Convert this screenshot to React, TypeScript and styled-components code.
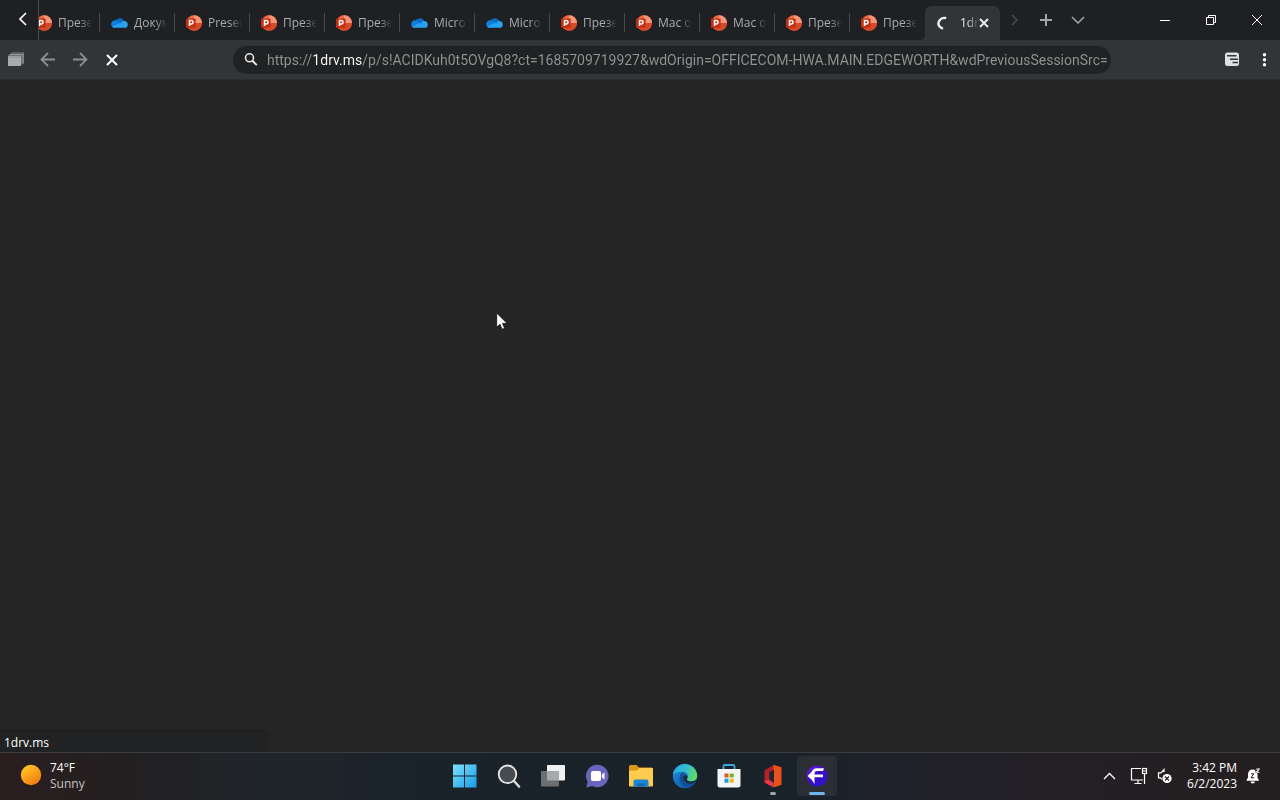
import React, { useId, useState } from "react";
import styled, { createGlobalStyle, css } from "styled-components";

const GlobalStyle = createGlobalStyle`
  * { box-sizing: border-box; }
  body {
    margin: 0;
    background: #252525;
    color: #fff;
    font-family: "Open Sans", "Noto Sans", sans-serif;
    font-size: 12px;
    line-height: 16px;
    overflow: hidden;
  }
  button {
    border: 0;
    padding: 0;
    background: none;
    color: inherit;
    font: inherit;
  }
  svg { display: block; flex: none; }
`;

const Desktop = styled.div`
  position: relative;
  min-height: 100vh;
  display: flex;
  flex-direction: column;
`;

/* ---------- title bar and tabs ---------- */

const TitleBar = styled.header`
  display: flex;
  height: 40px;
  background: #1f2024;
`;

const ScrollBack = styled.button`
  width: 39px;
  padding: 0 0 2px 8px;
  display: flex;
  align-items: center;
  justify-content: center;
  border-right: 1px solid #4b4d50;
`;

const TabStrip = styled.nav`
  display: flex;
  align-items: flex-end;
  min-width: 0;
  overflow: hidden;
`;

const TabList = styled.div`
  display: flex;
  align-items: flex-end;
  margin-left: -14px;
`;

const TabButton = styled.button<{ $active?: boolean }>`
  position: relative;
  flex: none;
  display: flex;
  align-items: center;
  gap: 6px;
  width: 75px;
  height: 34px;
  padding: 0 8px 1px 11px;
  color: #a9abad;
  text-align: left;

  &::after {
    content: "";
    position: absolute;
    right: 0;
    top: 7px;
    width: 1px;
    height: 19px;
    background: ${(p) => (p.$active ? "transparent" : "#47494d")};
  }

  &:nth-last-child(2)::after {
    background: transparent;
  }

  ${(p) =>
    p.$active &&
    css`
      gap: 8px;
      padding-right: 11px;
      background: #323538;
      border-radius: 7px 7px 0 0;
      color: #e8e8e8;

      &::before {
        content: "";
        position: absolute;
        left: -5px;
        bottom: 0;
        width: 5px;
        height: 5px;
        background: radial-gradient(circle at 0 0, transparent 5px, #323538 5px);
      }
    `}
`;

const TabTitle = styled.span<{ $wide?: boolean }>`
  flex: 1;
  min-width: 0;
  margin-right: ${(p) => (p.$wide ? "-8px" : "0")};
  overflow: hidden;
  white-space: nowrap;
  mask-image: linear-gradient(90deg, #000 calc(100% - 12px), transparent);
`;

const StripButton = styled.button<{ $dim?: boolean }>`
  width: ${(p) => (p.$dim ? 30 : 32)}px;
  height: 40px;
  display: flex;
  align-items: center;
  justify-content: center;
  color: ${(p) => (p.$dim ? "#4c4e51" : "#a3a5a7")};
`;

const WindowControls = styled.div`
  display: flex;
  margin-left: auto;
`;

const WindowButton = styled.button`
  width: 46px;
  height: 40px;
  display: flex;
  align-items: center;
  justify-content: center;
  color: #fff;
`;

/* ---------- navigation bar ---------- */

const NavBar = styled.div`
  display: flex;
  align-items: center;
  height: 40px;
  background: #323538;
  border-bottom: 1px solid #2b2c2e;
`;

const NavButton = styled.button<{ $dim?: boolean }>`
  width: 32px;
  height: 32px;
  display: flex;
  align-items: center;
  justify-content: center;
  color: ${(p) => (p.$dim ? "#8b8d8f" : "#fff")};
`;

const AddressBox = styled.form`
  flex: 1;
  min-width: 0;
  display: flex;
  align-items: center;
  gap: 8px;
  height: 28px;
  margin: 0 105px;
  padding: 0 0 0 10px;
  border-radius: 14px;
  background: #202223;
`;

const AddressLabel = styled.label`
  display: flex;
  color: #e6e6e6;
`;

/* The host part of the address is lit, the rest is grey. */
const AddressInput = styled.input`
  flex: 1;
  min-width: 0;
  height: 24px;
  border: 0;
  outline: 0;
  padding: 0;
  font: 14px/20px Roboto, "Open Sans", sans-serif;
  color: transparent;
  background: linear-gradient(90deg, #929494 46px, #ffffff 46px, #ffffff 95px, #929494 95px);
  background-clip: text;
  -webkit-background-clip: text;
`;

/* ---------- page ---------- */

const Page = styled.main`
  position: relative;
  flex: 1;
  background: #252525;
`;

const StatusBubble = styled.div`
  position: absolute;
  left: 0;
  bottom: 0;
  width: 268px;
  padding: 4px 4px 1px;
  background: #202223;
  border-top: 1px solid #1d1e1f;
  border-radius: 0 6px 0 0;
`;

const Pointer = styled.div`
  position: absolute;
  left: 496px;
  top: 312px;
`;

/* ---------- taskbar ---------- */

const Taskbar = styled.footer`
  display: grid;
  grid-template-columns: 1fr auto 1fr;
  align-items: center;
  height: 48px;
  padding-bottom: 1px;
  border-top: 1px solid #3a3c3e;
  background: linear-gradient(90deg, #2a1e1f 0%, #231f20 9%, #20252a 20%, #1b232a 30%, #1a2229 62%, #22212a 74%, #241f23 85%, #231e1f 100%);
`;

const Weather = styled.button`
  justify-self: start;
  display: flex;
  align-items: center;
  gap: 8px;
  padding-left: 20px;
  text-align: left;
`;

const Lines = styled.span<{ $end?: boolean }>`
  display: flex;
  flex-direction: column;
  text-align: ${(p) => (p.$end ? "right" : "left")};
`;

const Muted = styled.span`
  color: #c6c1c1;
`;

const AppRow = styled.div`
  display: flex;
  gap: 4px;
  padding-left: 2px;
`;

const AppButton = styled.button<{ $active?: boolean; $running?: boolean }>`
  position: relative;
  width: 40px;
  height: 40px;
  display: flex;
  align-items: center;
  justify-content: center;
  border-radius: 4px;
  background: ${(p) => (p.$active ? "#2b2e35" : "transparent")};

  &::after {
    content: "";
    position: absolute;
    bottom: 1px;
    width: ${(p) => (p.$active ? 16 : p.$running ? 6 : 0)}px;
    height: 3px;
    border-radius: 2px;
    background: ${(p) => (p.$active ? "#6cb6ea" : "#a0a2a4")};
  }
`;

const Tray = styled.div`
  justify-self: end;
  display: flex;
  align-items: center;
  gap: 14px;
  padding-right: 19px;
`;

const TrayButton = styled.button`
  display: flex;
  align-items: center;
  gap: 9px;
`;

/* ---------- icons ---------- */

const PowerPoint = () => {
  const id = useId();
  return (
    <svg width="16" height="16" viewBox="0 0 16 16">
      <defs>
        <clipPath id={id}>
          <circle cx="8.2" cy="8" r="7.8" />
        </clipPath>
      </defs>
      <g clipPath={`url(#${id})`}>
        <rect width="16" height="16" fill="#d9512f" />
        <path d="M8 0h8v8H8z" fill="#f7957a" />
        <path d="M0 0h8v8H0z" fill="#ed6c47" />
        <path d="M0 8h16v8H0z" fill="#d64a28" />
      </g>
      <rect x="0" y="3.4" width="9.6" height="9.4" rx=".9" fill="#c22f13" />
      <path d="M3.500 11V5.600h1.900a1.600 1.600 0 0 1 0 3.300H3.500" fill="none" stroke="#fff" strokeWidth="1.500" />
    </svg>
  );
};

const OneDrive = () => (
  <svg width="17" height="16" viewBox="0 0 17 16">
    <path d="M4 7.200A4.800 4.800 0 0 1 13.200 6.500l-2 5z" fill="#0a6cc6" />
    <path d="M5 5.400A3.900 3.900 0 0 0 .5 10.800c.5 1 1.500 1.700 2.600 1.700L11 9z" fill="#0f7fdc" />
    <path d="M10.600 7.400A3.400 3.400 0 0 1 16.700 10a2.600 2.600 0 0 1-2.500 2.700z" fill="#2aa5ee" />
    <path d="M1 11.400 9.600 7.800l6.700 3.800c-.5.700-1.200 1.100-2.100 1.100h-11c-.9 0-1.700-.5-2.200-1.300z" fill="#28a0f2" />
  </svg>
);

const Spinner = () => (
  <svg width="16" height="16" viewBox="0 0 16 16">
    <path d="M10.200 3.200C3.500 1.500-1.500 10 7 13.800" fill="none" stroke="#f2f2f2" strokeWidth="2.300" />
  </svg>
);

const stroke = { fill: "none", stroke: "currentColor" };

const Close = ({ size, weight }: { size: number; weight: number }) => (
  <svg width={size} height={size} viewBox={`0 0 ${size} ${size}`}>
    <path d={`M1 1 ${size - 1} ${size - 1}M${size - 1} 1 1 ${size - 1}`} {...stroke} strokeWidth={weight} />
  </svg>
);

const SearchGlyph = () => (
  <svg width="16" height="16" viewBox="0 0 16 16">
    <circle cx="6.500" cy="5.800" r="4" {...stroke} strokeWidth="1.600" />
    <path d="m9.400 8.700 4.400 4.400" {...stroke} strokeWidth="2" />
  </svg>
);

const Arrow = ({ flip }: { flip?: boolean }) => (
  <svg width="16" height="16" viewBox="0 0 16 16">
    <path d={flip ? "M1 7.500h13M8 1 14.500 7.500 8 14" : "M15 7.500H2M8 1 1.500 7.500 8 14"} {...stroke} strokeWidth="1.800" />
  </svg>
);

const Workspace = () => (
  <svg width="16" height="16" viewBox="0 0 16 16">
    <path d="M3 1h12.500V11.500" fill="none" stroke="#85878a" strokeWidth="1.200" />
    <path d="M1.500 2.500h12.500v10" fill="none" stroke="#9b9d9f" strokeWidth="1.200" />
    <rect x="0" y="3.500" width="13" height="10.500" fill="#a9abac" />
    <path d="M0 5h13" stroke="#85878a" strokeWidth=".8" />
  </svg>
);

const Wallet = () => (
  <svg width="16" height="16" viewBox="0 0 16 16">
    <rect x="1" y="0.500" width="14" height="13.500" rx="2.500" fill="#dfe0e1" />
    <path d="M3 3.800h9.500M6 7.300H14M8.500 10.500H14" stroke="#323538" strokeWidth="1.500" />
  </svg>
);

const Dots = () => (
  <svg width="16" height="16" viewBox="0 0 16 16" fill="currentColor">
    <circle cx="8.500" cy="2.700" r="1.700" />
    <circle cx="8.500" cy="7.700" r="1.700" />
    <circle cx="8.500" cy="12.700" r="1.700" />
  </svg>
);

const Sun = () => (
  <svg width="22" height="24" viewBox="0 0 22 24">
    <defs>
      <linearGradient id="sun" x1="0" y1="0" x2=".7" y2="1">
        <stop offset="0" stopColor="#ffd02e" />
        <stop offset=".6" stopColor="#fb9d17" />
        <stop offset="1" stopColor="#f07a12" />
      </linearGradient>
    </defs>
    <circle cx="11" cy="11" r="10.200" fill="url(#sun)" />
  </svg>
);

const Start = () => (
  <svg width="24" height="24" viewBox="0 0 24 24">
    <defs>
      <linearGradient id="start" x1="0" y1="0" x2="1" y2="1" >
        <stop offset="0" stopColor="#7fe2fb" />
        <stop offset="1" stopColor="#169be6" />
      </linearGradient>
    </defs>
    <path d="M0 .5h11v11H0zM12 .5h11.500v11H12zM0 12.500h11v11H0zM12 12.500h11.500v11H12z" fill="url(#start)" />
  </svg>
);

const TaskSearch = () => (
  <svg width="24" height="24" viewBox="0 0 24 24">
    <path d="m17 17 5 5.500" stroke="#d4d7d9" strokeWidth="2.600" strokeLinecap="round" />
    <circle cx="10.500" cy="10.300" r="8.800" fill="#474c50" stroke="#e4e6e7" strokeWidth="1.800" />
  </svg>
);

const TaskView = () => (
  <svg width="26" height="24" viewBox="0 0 26 24">
    <rect x="7" y="1" width="18" height="15.500" rx="1" fill="#f1f1f1" />
    <rect x="1" y="7" width="18" height="15.500" rx="1" fill="#6d7073" />
    <path d="M7 7h12v9.500H7z" fill="#a6a8aa" />
  </svg>
);

const Chat = () => (
  <svg width="24" height="24" viewBox="0 0 24 24">
    <path d="M12.300.8a11.200 11.200 0 1 1-5 21.200L1.200 23.500l1.500-5.600A11.200 11.200 0 0 1 12.300.8z" fill="#6a64ba" />
    <rect x="6" y="7" width="10" height="10" rx="1.800" fill="#fff" />
    <path d="m16.800 10.800 2.700-2.300v7l-2.700-2.300z" fill="#fff" />
  </svg>
);

const Explorer = () => (
  <svg width="26" height="24" viewBox="0 0 26 24">
    <path d="M1 2.500Q1 1 2.500 1h6L11 3.500h12.500Q25 3.500 25 5v6H1z" fill="#dc9514" />
    <path d="M1 6.500h8L11.500 4H24q1 0 1 1v16.500q0 1-1 1H2q-1 0-1-1z" fill="#fdcb4d" />
    <path d="M5.500 22.500v-5q0-2 2-2h11q2 0 2 2v5z" fill="#1d83d2" />
    <path d="M9 22.500v-3h8v3z" fill="#1669b4" />
  </svg>
);

const Edge = () => (
  <svg width="26" height="26" viewBox="0 0 26 26">
    <defs>
      <linearGradient id="edgeTop" x1="0" y1=".3" x2="1" y2=".5">
        <stop offset="0" stopColor="#2ba9e6" />
        <stop offset=".5" stopColor="#30bdd2" />
        <stop offset="1" stopColor="#64d95e" />
      </linearGradient>
      <linearGradient id="edgeLow" x1="0" y1="0" x2="1" y2="1">
        <stop offset="0" stopColor="#1f93da" />
        <stop offset="1" stopColor="#0d4c9a" />
      </linearGradient>
    </defs>
    <circle cx="13" cy="13" r="12.200" fill="url(#edgeLow)" />
    <path d="M.9 12A12.200 12.200 0 0 1 25.200 12.500c0 4-2.800 6-6 6-3.500 0-5.200-1.200-4.200-2.600 2-2.800.5-7.100-4.400-7.100C6 8.800 2 10 .9 12z" fill="url(#edgeTop)" />
    <path d="M10.500 9.500C6 12 6.500 21 14 24.500c4 .5 7.500-2 9.500-5.200-5 2.500-11.500 1-12.500-3.500-.4-2.500.5-4 1.800-5.200z" fill="#114f9c" />
    <path d="M11.400 13c1.300-2 4.300-1 4.200 1-.1 1.200-1.100 1.800-.5 2.900 1 1.900 6 2.200 8.900-.5-1 3.500-3.500 4.300-6 4.300-4 0-7.800-3.700-6.600-7.700z" fill="#1c2a38" />
  </svg>
);

const Store = () => (
  <svg width="24" height="24" viewBox="0 0 24 24">
    <path d="M6.500 5.500V2.300Q6.500 1 7.800 1h8.400q1.300 0 1.300 1.300v3.200" fill="none" stroke="#39a9de" strokeWidth="1.800" />
    <path d="M.5 5h23v16q0 2.500-2.500 2.500H3Q.5 23.500.5 21z" fill="#f3f4f5" />
    <path d="M7.500 9.500h4v4h-4z" fill="#e05a28" />
    <path d="M12.700 9.500h4v4h-4z" fill="#78b51a" />
    <path d="M7.500 14.700h4v4h-4z" fill="#1c9de0" />
    <path d="M12.700 14.700h4v4h-4z" fill="#f4b713" />
  </svg>
);

const Office = () => (
  <svg width="24" height="24" viewBox="0 0 24 24">
    <path d="M3.500 6.500 13 .8V6L8.500 8v8L5.500 18.500l-2-1.500z" fill="#b3212c" />
    <path d="m12.500.8 8 2.500v17.500l-8 2.700z" fill="#e8501c" />
    <path d="m3.500 17 4.500-1.500 4.500 3v5l-9-5z" fill="#e33b4a" />
    <path d="m8.500 8 4.500-2v12.500L8.500 16z" fill="#20262c" />
  </svg>
);

const BrowserApp = () => (
  <svg width="24" height="24" viewBox="0 0 24 24">
    <defs>
      <linearGradient id="browser" x1="0" y1="0" x2="1" y2="1">
        <stop offset="0" stopColor="#6a1de0" />
        <stop offset=".5" stopColor="#3a0cc4" />
        <stop offset="1" stopColor="#3413d8" />
      </linearGradient>
    </defs>
    <circle cx="12" cy="12" r="10.500" fill="url(#browser)" />
    <path d="M19 4.200h-7.500Q8 4.500 6.500 8L2.500 12l4 3.500 3 4.500v-6.700H18v-2.800H9.500V9q.3-2 2.500-2h6z" fill="#fff" />
  </svg>
);

const Glyph = ({ d, w, h, weight = 1.5 }: { d: string; w: number; h: number; weight?: number }) => (
  <svg width={w} height={h} viewBox={`0 0 ${w} ${h}`}>
    <path d={d} {...stroke} strokeWidth={weight} />
  </svg>
);

const Network = () => (
  <svg width="18" height="18" viewBox="0 0 18 18">
    <path d="M11 1.500H1.500v11.500h11.500M4.500 16.500h7M8 13v3.500" {...stroke} strokeWidth="1.200" />
    <rect x="12.500" y="1.500" width="4" height="5" {...stroke} strokeWidth="1.200" />
    <path d="M13 4h3M14.500 7v10" {...stroke} strokeWidth="1.200" />
  </svg>
);

const SpeakerOff = () => (
  <svg width="16" height="16" viewBox="0 0 16 16">
    <path d="M7 4V1.500L4 4.800H1.500v5h2l1.500 1.500" {...stroke} strokeWidth="1.200" />
    <circle cx="10" cy="10.500" r="4.600" fill="#fff" />
    <path d="m8 8.500 4 4m0-4-4 4" stroke="#241f23" strokeWidth="1.200" />
  </svg>
);

const Bell = () => (
  <svg width="15" height="16" viewBox="0 0 15 16">
    <path d="M6.500 1.500c3.200 0 5 2 5 5V9.500l1.700 3.200H.3L2 9.500v-3c0-3 1.500-5 4.500-5z" fill="#fff" />
    <path d="M4.500 13.500a2.200 1.900 0 0 0 4.400 0z" fill="#fff" />
    <path d="M5 5.800h2.800L5 9.800h3.200" fill="none" stroke="#231e1f" strokeWidth="1" />
    <path d="M9.500 0H15v5H9.500z" fill="#231e1f" />
    <path d="M10.300 1h2.800l-2.800 3.300h3.200" fill="none" stroke="#fff" strokeWidth="1.100" />
  </svg>
);

const Cursor = () => (
  <svg width="12" height="19" viewBox="0 0 12 19">
    <path d="M.7 1v14.300l3.300-3 2.100 5 2.500-1-2.100-4.900h4.600z" fill="#fff" stroke="#111" strokeWidth=".8" />
  </svg>
);

/* ---------- data ---------- */

type Kind = "ppt" | "cloud";
const tabs: { kind: Kind; title: string }[] = [
  { kind: "ppt", title: "Презе" },
  { kind: "cloud", title: "Докум" },
  { kind: "ppt", title: "Presen" },
  { kind: "ppt", title: "Презе" },
  { kind: "ppt", title: "Презе" },
  { kind: "cloud", title: "Micro" },
  { kind: "cloud", title: "Micro" },
  { kind: "ppt", title: "Презе" },
  { kind: "ppt", title: "Mac o" },
  { kind: "ppt", title: "Mac o" },
  { kind: "ppt", title: "Презе" },
  { kind: "ppt", title: "Презе" },
];

const apps = [
  { name: "Start", icon: <Start /> },
  { name: "Search", icon: <TaskSearch /> },
  { name: "Task view", icon: <TaskView /> },
  { name: "Chat", icon: <Chat /> },
  { name: "File Explorer", icon: <Explorer /> },
  { name: "Edge", icon: <Edge /> },
  { name: "Store", icon: <Store /> },
  { name: "Office", icon: <Office />, running: true },
  { name: "Browser", icon: <BrowserApp />, active: true },
];

export default function App() {
  const [address, setAddress] = useState(
    "https://1drv.ms/p/s!ACIDKuh0t5OVgQ8?ct=1685709719927&wdOrigin=OFFICECOM-HWA.MAIN.EDGEWORTH&wdPreviousSessionSrc="
  );

  return (
    <Desktop>
      <GlobalStyle />
      <TitleBar>
        <ScrollBack aria-label="Scroll tabs left">
          <Glyph w={8} h={14} d="M7 1 1 7l6 6" weight={1.6} />
        </ScrollBack>
        <TabStrip aria-label="Tabs">
          <TabList>
            {tabs.map((tab, i) => (
              <TabButton key={i}>
                {tab.kind === "ppt" ? <PowerPoint /> : <OneDrive />}
                <TabTitle>{tab.title}</TabTitle>
              </TabButton>
            ))}
            <TabButton $active>
              <Spinner />
              <TabTitle $wide>1dr</TabTitle>
              <Close size={10} weight={2} />
            </TabButton>
          </TabList>
        </TabStrip>
        <StripButton $dim aria-label="Scroll tabs right">
          <Glyph w={8} h={12} d="m1 1 5 5-5 5" />
        </StripButton>
        <StripButton aria-label="New tab">
          <Glyph w={12} h={12} d="M6 0v12M0 6h12" weight={2} />
        </StripButton>
        <StripButton aria-label="Tab list">
          <Glyph w={14} h={8} d="m1 1 6 6 6-6" />
        </StripButton>
        <WindowControls>
          <WindowButton aria-label="Minimize">
            <Glyph w={10} h={1} d="M0 .5h10" weight={1} />
          </WindowButton>
          <WindowButton aria-label="Restore">
            <Glyph w={10} h={10} d="M.5 2.5h7v7h-7zM2.5 2.5v-2h7v7h-2" weight={1} />
          </WindowButton>
          <WindowButton aria-label="Close window">
            <Close size={12} weight={1} />
          </WindowButton>
        </WindowControls>
      </TitleBar>

      <NavBar>
        <NavButton $dim aria-label="Workspaces"><Workspace /></NavButton>
        <NavButton $dim aria-label="Back"><Arrow /></NavButton>
        <NavButton $dim aria-label="Forward"><Arrow flip /></NavButton>
        <NavButton aria-label="Stop"><Close size={12} weight={2} /></NavButton>
        <AddressBox onSubmit={(e) => e.preventDefault()}>
          <AddressLabel htmlFor="address" aria-label="Address">
            <SearchGlyph />
          </AddressLabel>
          <AddressInput
            id="address"
            type="text"
            spellCheck={false}
            value={address}
            onChange={(e) => setAddress(e.target.value)}
          />
        </AddressBox>
        <NavButton aria-label="Wallet"><Wallet /></NavButton>
        <NavButton aria-label="Menu"><Dots /></NavButton>
      </NavBar>

      <Page>
        <StatusBubble>1drv.ms</StatusBubble>
      </Page>

      <Taskbar>
        <Weather>
          <Sun />
          <Lines>
            <span>74°F</span>
            <Muted>Sunny</Muted>
          </Lines>
        </Weather>
        <AppRow>
          {apps.map((app) => (
            <AppButton key={app.name} aria-label={app.name} $active={app.active} $running={app.running}>
              {app.icon}
            </AppButton>
          ))}
        </AppRow>
        <Tray>
          <TrayButton aria-label="Hidden icons">
            <Glyph w={13} h={8} d="m1 7 5.5-5.5L12 7" weight={1.3} />
          </TrayButton>
          <TrayButton aria-label="Network and volume">
            <Network />
            <SpeakerOff />
          </TrayButton>
          <TrayButton>
            <Lines $end>
              <span>3:42 PM</span>
              <span>6/2/2023</span>
            </Lines>
            <Bell />
          </TrayButton>
        </Tray>
      </Taskbar>

      <Pointer aria-hidden="true">
        <Cursor />
      </Pointer>
    </Desktop>
  );
}
